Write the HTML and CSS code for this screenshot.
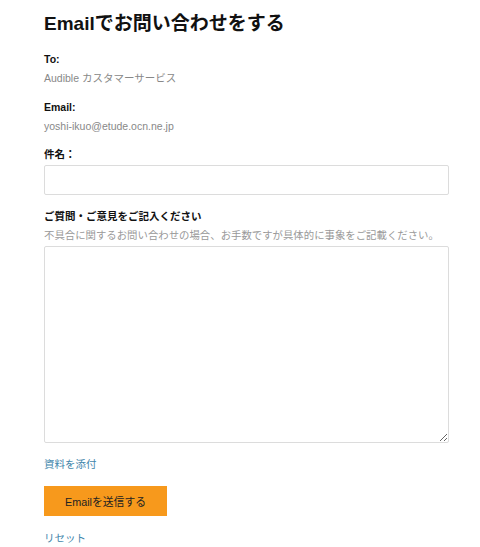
FILE: index.html
```html
<!DOCTYPE html>
<html lang="ja">
<head>
<meta charset="utf-8">
<link rel="stylesheet" href="styles.css">
</head>
<body>
<main class="page">
  <h1 class="title">Emailでお問い合わせをする</h1>
  <div class="field">
    <div class="label">To:</div>
    <div class="value">Audible カスタマーサービス</div>
  </div>
  <div class="field">
    <div class="label">Email:</div>
    <div class="value">yoshi-ikuo@etude.ocn.ne.jp</div>
  </div>
  <div class="field subject">
    <div class="label">件名：</div>
    <input class="input" type="text">
  </div>
  <div class="field message">
    <div class="label">ご質問・ご意見をご記入ください</div>
    <div class="hint">不具合に関するお問い合わせの場合、お手数ですが具体的に事象をご記載ください。</div>
    <textarea class="textarea"></textarea>
  </div>
  <a class="link attach" href="#">資料を添付</a>
  <button class="btn" type="button">Emailを送信する</button>
  <a class="link reset" href="#">リセット</a>
</main>
</body>
</html>
```
FILE: styles.css
```css
html, body {
  margin: 0;
  padding: 0;
  background: #fff;
}
body {
  font-family: "Liberation Sans", Arial, "Noto Sans CJK JP", sans-serif;
  font-size: 10.5px;
  color: #111;
}
.page {
  display: flex;
  flex-direction: column;
  align-items: flex-start;
  padding: 12px 31px 0 44px;
}
.title {
  margin: 0;
  font-size: 19px;
  line-height: 24px;
  font-weight: 700;
  color: #111;
}
.field {
  display: flex;
  flex-direction: column;
  align-self: stretch;
}
.field:first-of-type { margin-top: 16px; }
.field + .field { margin-top: 15px; }
.label {
  font-weight: 700;
  line-height: 14px;
  font-size: 10.5px;
}
.value {
  margin-top: 5px;
  color: #888;
  line-height: 14px;
}
.field.subject { margin-top: 14px; }
.subject .label { margin-bottom: 4px; }
.input {
  box-sizing: border-box;
  width: 405px;
  height: 30px;
  margin: 0;
  border: 1px solid #dcdcdc;
  border-radius: 2px;
  background: #fff;
  outline: none;
}
.field.message { margin-top: 14px; }
.hint {
  margin-top: 6px;
  color: #999;
  line-height: 14px;
  font-size: 10.4px;
}
.textarea {
  box-sizing: border-box;
  width: 405px;
  height: 197px;
  margin: 3px 0 0;
  border: 1px solid #dcdcdc;
  border-radius: 2px;
  background: #fff;
  resize: both;
  font: inherit;
  display: block;
}
.link {
  color: #3f86ab;
  text-decoration: none;
  line-height: 14px;
  font-size: 10.5px;
}
.attach { margin-top: 14px; }
.btn {
  margin-top: 15px;
  width: 123px;
  height: 30px;
  border: none;
  border-radius: 0;
  background: #f7991c;
  color: #222;
  font: inherit;
  font-size: 10.8px;
  padding: 0;
}
.reset { margin-top: 15px; }
```
